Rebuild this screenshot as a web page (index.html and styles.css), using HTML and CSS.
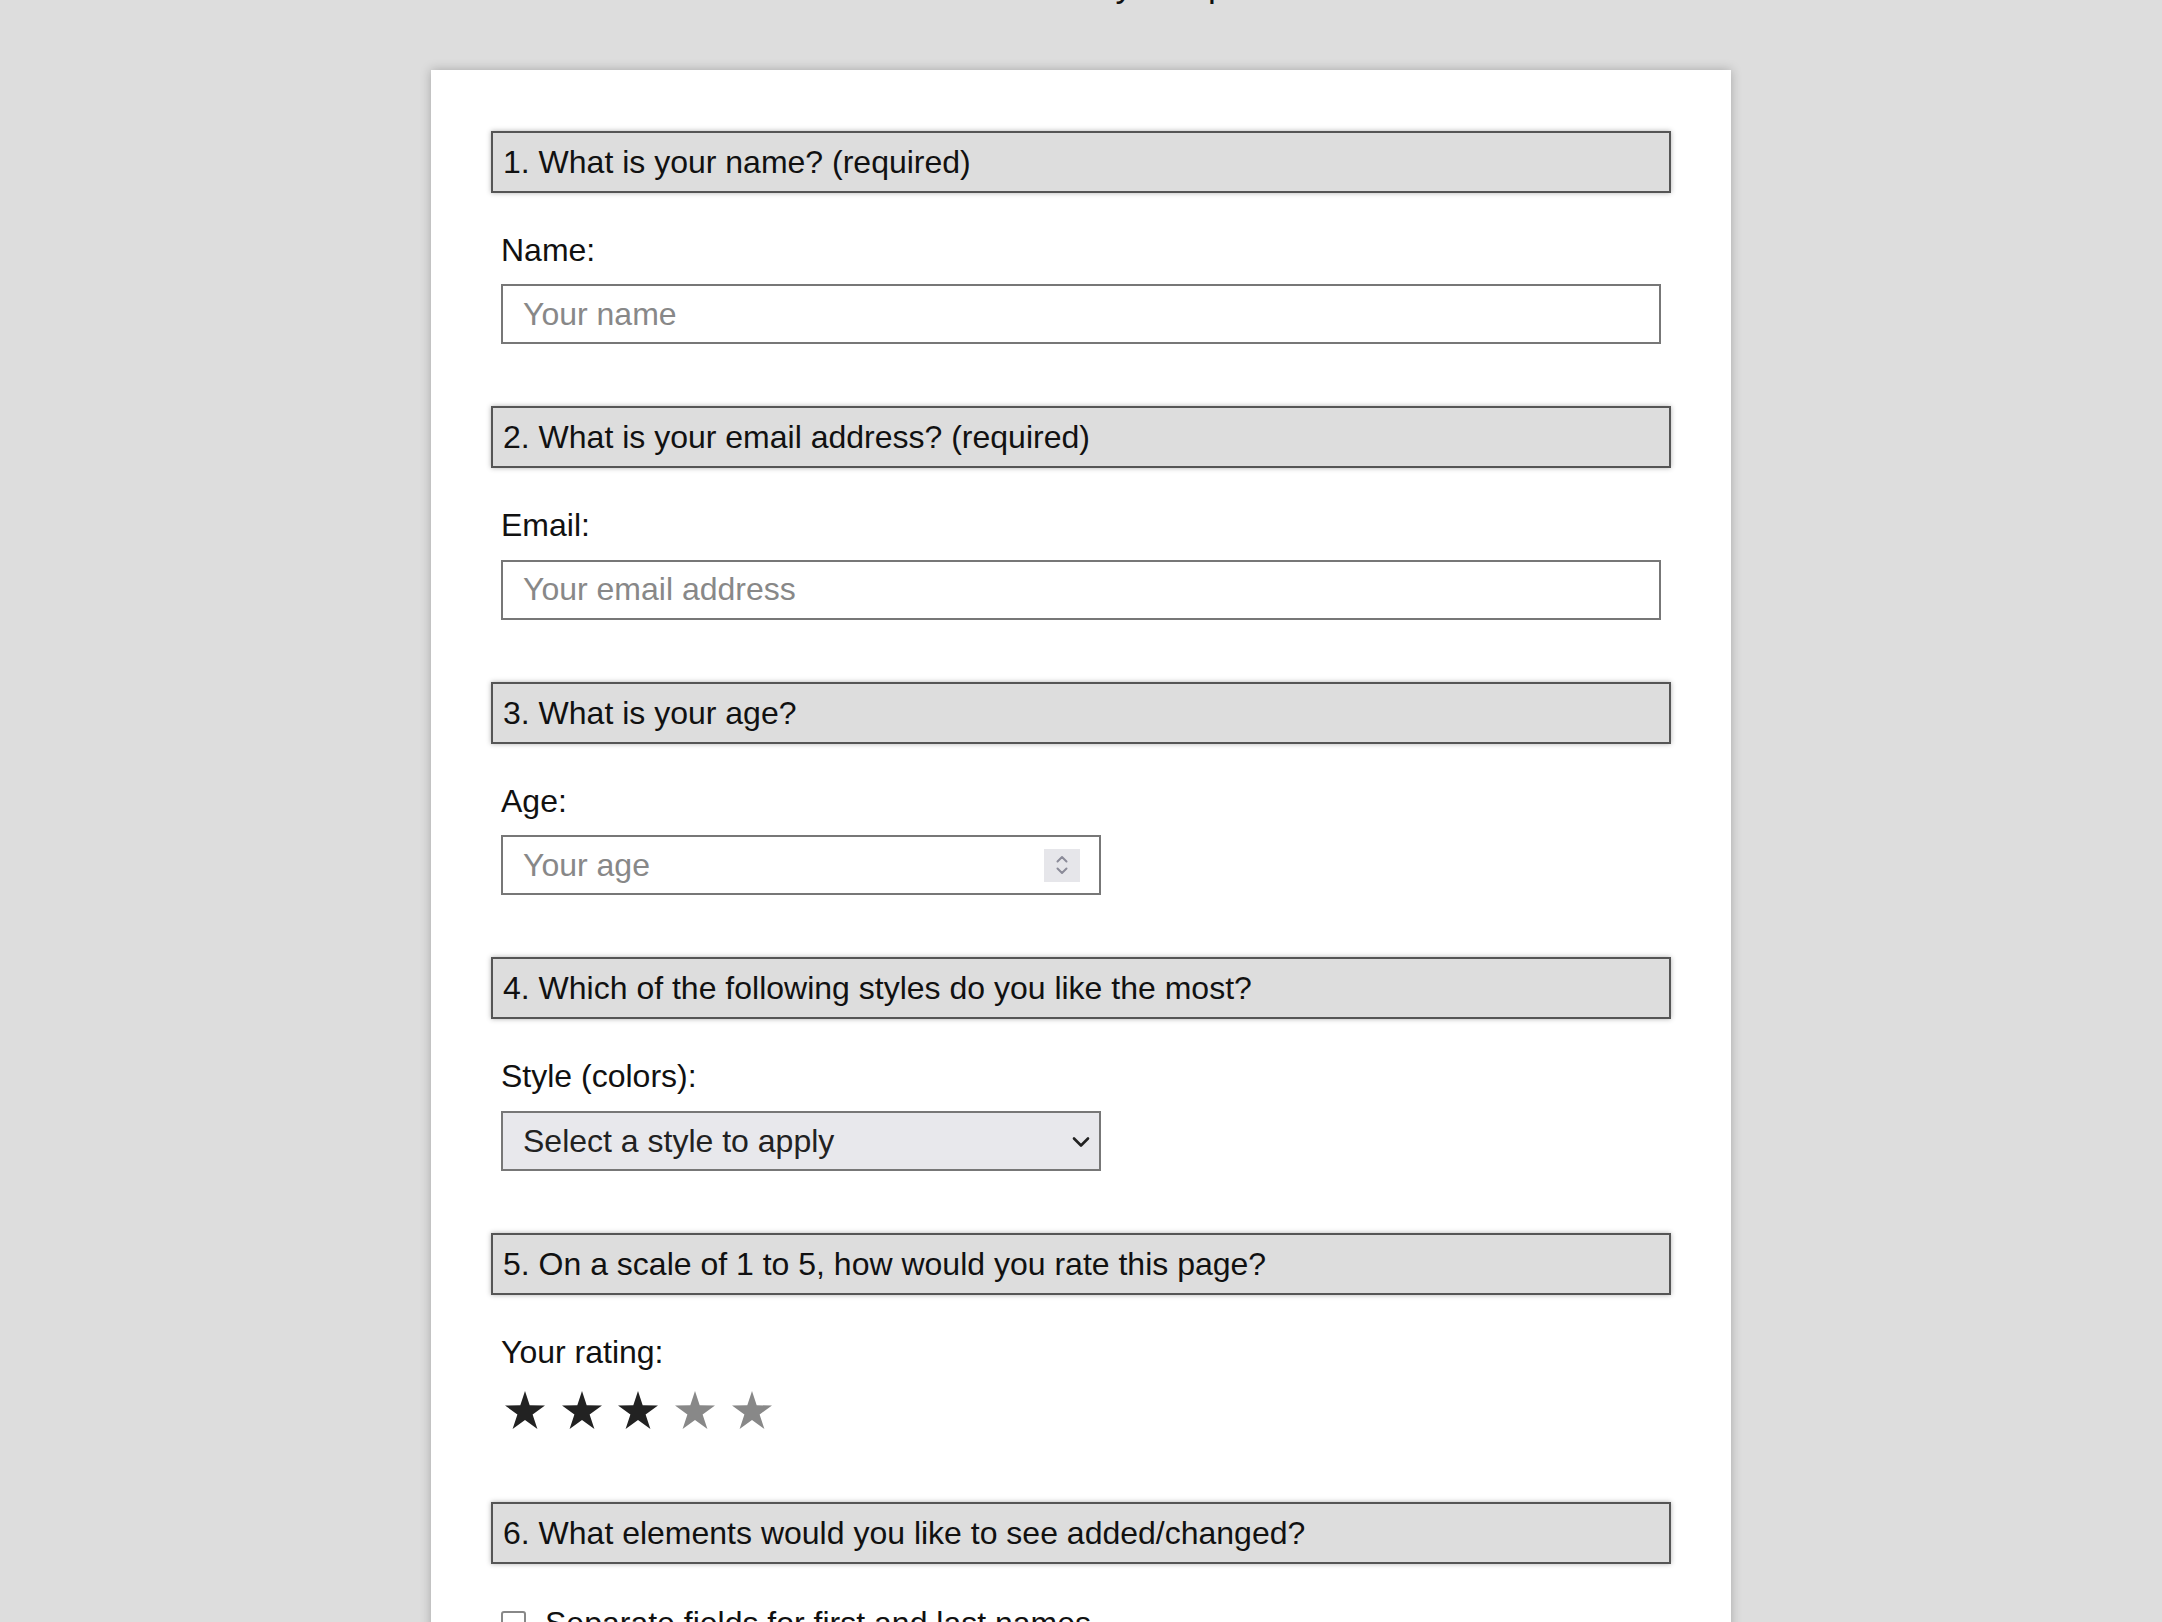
FILE: index.html
```html
<!DOCTYPE html>
<html lang="en">
<head>
<meta charset="utf-8">
<title>Survey</title>
<link rel="stylesheet" href="styles.css">
</head>
<body>
<header class="page-head">
  <h1 class="title">Survey Template</h1>
</header>
<main class="card">
  <form class="survey">
    <section class="q">
      <h2 class="q-title">1. What is your name? (required)</h2>
      <div class="q-body">
        <label class="field-label" for="name">Name:</label>
        <input class="text-input" id="name" type="text" placeholder="Your name">
      </div>
    </section>

    <section class="q">
      <h2 class="q-title">2. What is your email address? (required)</h2>
      <div class="q-body">
        <label class="field-label" for="email">Email:</label>
        <input class="text-input" id="email" type="text" placeholder="Your email address">
      </div>
    </section>

    <section class="q">
      <h2 class="q-title">3. What is your age?</h2>
      <div class="q-body">
        <label class="field-label" for="age">Age:</label>
        <div class="num-field">
          <input class="num-input" id="age" type="text" placeholder="Your age">
          <span class="spinner" aria-hidden="true">
            <svg width="14" height="22" viewBox="0 0 14 22"><path d="M2.5 7.5 L7 3 L11.5 7.5" fill="none" stroke="#8b8b99" stroke-width="2" stroke-linecap="round" stroke-linejoin="round"/><path d="M2.5 14.5 L7 19 L11.5 14.5" fill="none" stroke="#8b8b99" stroke-width="2" stroke-linecap="round" stroke-linejoin="round"/></svg>
          </span>
        </div>
      </div>
    </section>

    <section class="q">
      <h2 class="q-title">4. Which of the following styles do you like the most?</h2>
      <div class="q-body">
        <label class="field-label" for="style">Style (colors):</label>
        <div class="select-field">
          <select class="select" id="style">
            <option>Select a style to apply</option>
          </select>
          <svg class="select-chev" width="18" height="12" viewBox="0 0 18 12"><path d="M2 2.5 L9 9.5 L16 2.5" fill="none" stroke="#222" stroke-width="2.6" stroke-linecap="round" stroke-linejoin="round"/></svg>
        </div>
      </div>
    </section>

    <section class="q q-rating">
      <h2 class="q-title">5. On a scale of 1 to 5, how would you rate this page?</h2>
      <div class="q-body">
        <span class="field-label">Your rating:</span>
        <div class="stars">
          <svg class="star on" viewBox="0 0 40 38"><path d="M20 0 L24.7 14.3 L40 14.5 L27.6 23.4 L32.4 38 L20 29.1 L7.6 38 L12.4 23.4 L0 14.5 L15.3 14.3 Z"/></svg>
          <svg class="star on" viewBox="0 0 40 38"><path d="M20 0 L24.7 14.3 L40 14.5 L27.6 23.4 L32.4 38 L20 29.1 L7.6 38 L12.4 23.4 L0 14.5 L15.3 14.3 Z"/></svg>
          <svg class="star on" viewBox="0 0 40 38"><path d="M20 0 L24.7 14.3 L40 14.5 L27.6 23.4 L32.4 38 L20 29.1 L7.6 38 L12.4 23.4 L0 14.5 L15.3 14.3 Z"/></svg>
          <svg class="star off" viewBox="0 0 40 38"><path d="M20 0 L24.7 14.3 L40 14.5 L27.6 23.4 L32.4 38 L20 29.1 L7.6 38 L12.4 23.4 L0 14.5 L15.3 14.3 Z"/></svg>
          <svg class="star off" viewBox="0 0 40 38"><path d="M20 0 L24.7 14.3 L40 14.5 L27.6 23.4 L32.4 38 L20 29.1 L7.6 38 L12.4 23.4 L0 14.5 L15.3 14.3 Z"/></svg>
        </div>
      </div>
    </section>

    <section class="q">
      <h2 class="q-title">6. What elements would you like to see added/changed?</h2>
      <div class="q-body">
        <label class="check-row"><span class="check-box"></span><span>Separate fields for first and last names</span></label>
        <label class="check-row"><span class="check-box"></span><span>Validation for email addresses</span></label>
      </div>
    </section>
  </form>
</main>
</body>
</html>
```

FILE: styles.css
```css
html, body {
  margin: 0;
  padding: 0;
}
body {
  background: #dddddd;
  font-family: "Liberation Sans", Arial, sans-serif;
  color: #111;
}
.page-head {
  height: 70px;
  overflow: hidden;
}
.title {
  margin: -35px 0 0;
  padding-left: 146px;
  font-size: 35px;
  line-height: 40px;
  font-weight: normal;
  text-align: center;
  color: #111;
}
.card {
  width: 1300px;
  box-sizing: border-box;
  margin: 0 auto;
  background: #fff;
  padding: 61px 60px 40px;
  box-shadow: 0 0 10px rgba(0,0,0,0.25);
}
.survey {
  display: flex;
  flex-direction: column;
}
.q-title {
  margin: 0;
  background: #dddddd;
  border: 2px solid #555;
  box-shadow: 0 0 5px rgba(0,0,0,0.3);
  padding: 10px 10px;
  font-size: 32px;
  line-height: 38px;
  font-weight: normal;
  color: #111;
}
.q-body {
  display: flex;
  flex-direction: column;
  align-items: flex-start;
  padding: 39px 10px 62px;
}
.q-rating .q-body {
  padding-bottom: 62px;
}
.field-label {
  font-size: 32px;
  line-height: 36.4px;
  color: #111;
  margin-bottom: 16px;
}
.text-input {
  box-sizing: border-box;
  width: 100%;
  height: 60px;
  border: 2px solid #777;
  padding: 0 20px;
  font-family: inherit;
  font-size: 32px;
  color: #111;
  background: #fff;
  outline: none;
}
.text-input::placeholder,
.num-input::placeholder {
  color: #888;
}
.num-field {
  box-sizing: border-box;
  width: 600px;
  height: 60px;
  border: 2px solid #777;
  display: flex;
  align-items: center;
  padding: 0 19px 0 20px;
  background: #fff;
}
.num-input {
  flex: 1;
  min-width: 0;
  border: none;
  outline: none;
  padding: 0;
  font-family: inherit;
  font-size: 32px;
  color: #111;
  background: transparent;
}
.spinner {
  width: 36px;
  height: 33px;
  background: #e6e6ea;
  display: flex;
  align-items: center;
  justify-content: center;
}
.select-field {
  box-sizing: border-box;
  width: 600px;
  height: 60px;
  border: 2px solid #777;
  background: #e8e8ec;
  display: flex;
  align-items: center;
  padding: 0 9px 0 20px;
}
.select {
  flex: 1;
  appearance: none;
  -webkit-appearance: none;
  border: none;
  outline: none;
  background: transparent;
  padding: 0;
  font-family: inherit;
  font-size: 32px;
  color: #222;
}
.select-chev {
  flex: none;
  margin-top: 2px;
}
.stars {
  display: flex;
  gap: 16.7px;
  height: 54px;
  padding-top: 5px;
  box-sizing: border-box;
  padding-left: 4px;
}
.star {
  width: 40px;
  height: 38px;
}
.star.on { fill: #222; }
.star.off { fill: #888; }
.check-row {
  display: flex;
  align-items: center;
  gap: 19px;
  font-size: 32px;
  line-height: 40px;
  color: #111;
  margin-bottom: 14px;
}
.check-box {
  width: 21px;
  height: 21px;
  border: 2px solid #888;
  border-radius: 3px;
  background: #fff;
  flex: none;
}
```
